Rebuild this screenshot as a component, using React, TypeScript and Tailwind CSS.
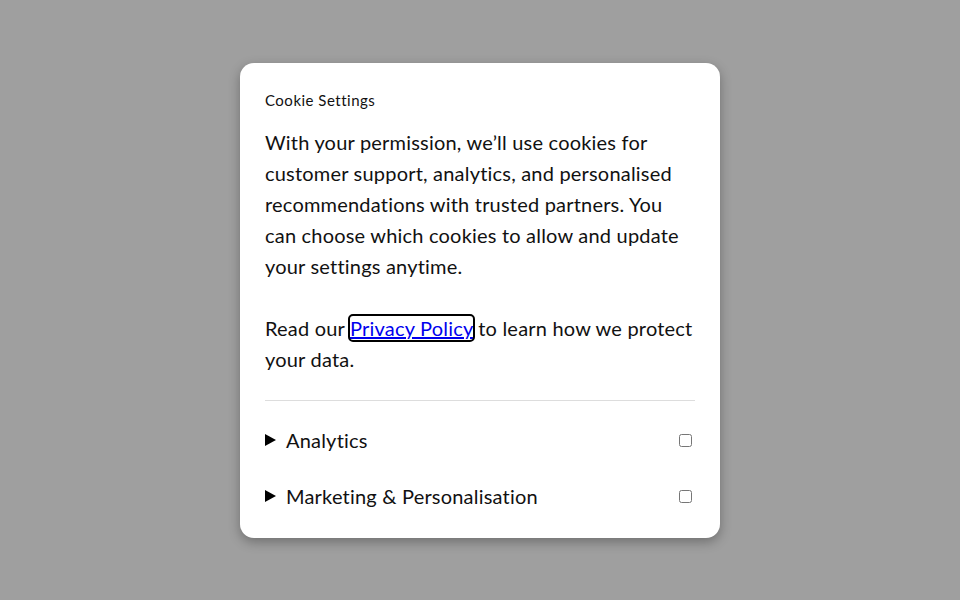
import { useState } from "react"

const rows = ["Analytics", "Marketing & Personalisation"]

export default function App() {
  const [checked, setChecked] = useState<Record<string, boolean>>({})

  return (
    <div className="min-h-screen w-full bg-[#9f9f9f] flex justify-center pt-[63px] font-['Lato','Open_Sans',sans-serif] text-[#111] tracking-[0.2px]">
      <div className="w-[480px] h-fit bg-white rounded-[14px] shadow-[0_4px_12px_rgba(0,0,0,0.3)] p-[25px] pb-[26px]">
        <h2 className="text-[15px] leading-6 font-normal tracking-[0.5px]">Cookie Settings</h2>

        <div className="mt-[15px] text-[20px] leading-[31px]">
          <p>
            With your permission, we’ll use cookies for customer support, analytics, and personalised
            recommendations with trusted partners. You can choose which cookies to allow and update your
            settings anytime.
          </p>
          <p className="mt-[31px]">
            Read our{" "}
            <a href="#" className="text-[#0000ee] underline outline-2 outline-black rounded-[3px] outline-offset-0">
              Privacy Policy
            </a>{" "}
            to learn how we protect your data.
          </p>
        </div>

        <hr className="mt-[25px] border-t border-[#dddddd]" />

        <div className="mt-[23px] flex flex-col gap-6">
          {rows.map((label) => (
            <div key={label} className="flex items-center justify-between h-8 text-[20px]">
              <div className="flex items-center gap-[10px]">
                <svg width="11" height="12" viewBox="0 0 11 12">
                  <path d="M0 0 L11 6 L0 12 Z" fill="#000" />
                </svg>
                <span>{label}</span>
              </div>
              <input
                type="checkbox"
                checked={!!checked[label]}
                onChange={(e) => setChecked({ ...checked, [label]: e.target.checked })}
                className="w-[13px] h-[13px] mr-[3px]"
              />
            </div>
          ))}
        </div>
      </div>
    </div>
  )
}
